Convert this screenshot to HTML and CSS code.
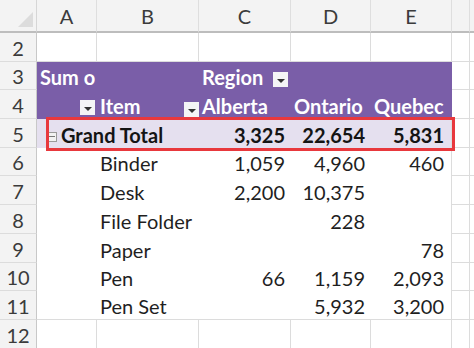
FILE: index.html
```html
<!DOCTYPE html>
<html lang="en">
<head>
  <meta charset="UTF-8" />
  <title>Pivot Table</title>
  <link rel="stylesheet" href="styles.css">
</head>
<body>
  <div class="sheet">
    <!-- column headers -->
    <div class="corner"><span class="tri"></span></div>
    <div class="hd">A</div>
    <div class="hd">B</div>
    <div class="hd">C</div>
    <div class="hd">D</div>
    <div class="hd">E</div>
    <div class="hd"></div>
    <div class="hd"></div>

    <!-- row 2 -->
    <div class="rn">2</div>
    <div class="c"></div><div class="c"></div><div class="c"></div><div class="c"></div>
    <div class="c"></div><div class="c"></div><div class="c"></div>

    <!-- row 3 -->
    <div class="rn">3</div>
    <div class="ph clip">Sum o</div>
    <div class="ph"></div>
    <div class="ph">Region <span class="dd dd-region"></span></div>
    <div class="ph"></div>
    <div class="ph"></div>
    <div class="c"></div><div class="c"></div>

    <!-- row 4 -->
    <div class="rn">4</div>
    <div class="ph right"><span class="dd"></span></div>
    <div class="ph split"><span>Item</span><span class="dd"></span></div>
    <div class="ph">Alberta</div>
    <div class="ph">Ontario</div>
    <div class="ph clip">Quebec</div>
    <div class="c"></div><div class="c"></div>

    <!-- row 5 -->
    <div class="rn">5</div>
    <div class="gt wide"><span class="minus"></span>Grand Total</div>
    <div class="gt num">3,325</div>
    <div class="gt num">22,654</div>
    <div class="gt num edge">5,831</div>
    <div class="c"></div><div class="c"></div>

    <!-- rows 6-11 -->
    <div class="rn">6</div>
    <div class="pv"></div><div class="pv">Binder</div>
    <div class="pv num">1,059</div><div class="pv num">4,960</div><div class="pv num edge">460</div>
    <div class="c"></div><div class="c"></div>

    <div class="rn">7</div>
    <div class="pv"></div><div class="pv">Desk</div>
    <div class="pv num">2,200</div><div class="pv num">10,375</div><div class="pv num edge"></div>
    <div class="c"></div><div class="c"></div>

    <div class="rn">8</div>
    <div class="pv"></div><div class="pv">File Folder</div>
    <div class="pv num"></div><div class="pv num">228</div><div class="pv num edge"></div>
    <div class="c"></div><div class="c"></div>

    <div class="rn">9</div>
    <div class="pv"></div><div class="pv">Paper</div>
    <div class="pv num"></div><div class="pv num"></div><div class="pv num edge">78</div>
    <div class="c"></div><div class="c"></div>

    <div class="rn">10</div>
    <div class="pv"></div><div class="pv">Pen</div>
    <div class="pv num">66</div><div class="pv num">1,159</div><div class="pv num edge">2,093</div>
    <div class="c"></div><div class="c"></div>

    <div class="rn">11</div>
    <div class="pv last"></div><div class="pv last">Pen Set</div>
    <div class="pv num last"></div><div class="pv num last">5,932</div><div class="pv num edge last">3,200</div>
    <div class="c"></div><div class="c"></div>

    <!-- row 12 -->
    <div class="rn">12</div>
    <div class="c"></div><div class="c"></div><div class="c"></div><div class="c"></div>
    <div class="c"></div><div class="c"></div><div class="c"></div>

    <div class="highlight"></div>
  </div>
</body>
</html>
```

FILE: styles.css
```css
* {
  box-sizing: border-box;
}
body {
  margin: 0;
  background: #ffffff;
  font-family: Lato, "Open Sans", sans-serif;
  color: #1f1f1f;
  overflow: hidden;
}

.sheet {
  position: relative;
  display: grid;
  grid-template-columns: 37px 60px 102px 92px 80px 81px 18px 1fr;
  grid-template-rows: 33px repeat(11, 28.7px);
  font-size: 20px;
}
.sheet > div {
  display: flex;
  align-items: flex-end;
  padding: 0 3px 1px;
  white-space: nowrap;
  line-height: 24px;
}

.corner {
  background: #f3f3f3;
  border-right: 1px solid #d6d6d6;
  border-bottom: 2px solid #bdbdbd;
  position: relative;
}
.tri {
  position: absolute;
  right: 3px;
  bottom: 4px;
  width: 0;
  height: 0;
  border-left: 15px solid transparent;
  border-bottom: 15px solid #dcdcdc;
}
.sheet > .hd {
  background: #f3f3f3;
  color: #3b3b3b;
  justify-content: center;
  border-right: 1px solid #dedede;
  border-bottom: 2px solid #bdbdbd;
  padding-bottom: 3px;
}
.sheet > .rn {
  background: #f3f3f3;
  color: #3b3b3b;
  justify-content: center;
  border-right: 1px solid #c8c8c8;
  border-bottom: 1px solid #dcdcdc;
  padding: 0 0 1px;
}
.c {
  border-right: 1px solid #dcdcdc;
  border-bottom: 1px solid #dcdcdc;
}

.ph {
  background: #7a5ea8;
  color: #ffffff;
  font-weight: 700;
}
.clip {
  overflow: hidden;
}
.sheet > .right {
  justify-content: flex-end;
  padding-right: 2px;
  padding-bottom: 2px;
}
.sheet > .split {
  justify-content: space-between;
  padding-right: 0;
  padding-bottom: 1px;
}
.split .dd {
  margin-bottom: 1px;
}
.dd {
  display: inline-flex;
  align-items: center;
  justify-content: center;
  width: 15px;
  height: 15px;
  background: #f4f4f6;
  margin-bottom: 2px;
}
.dd::after {
  content: "";
  margin-top: 3px;
  border-left: 4px solid transparent;
  border-right: 4px solid transparent;
  border-top: 4px solid #333333;
}
.dd-region {
  margin-left: 10px;
}

.gt {
  background: #e5e0ef;
  font-weight: 700;
  color: #141414;
}
.wide {
  grid-column: span 2;
}
.sheet > .wide {
  padding-left: 10px;
}
.minus {
  width: 10px;
  height: 10px;
  border: 1px solid #9a9a9a;
  background: #f2f2f2;
  margin: 0 4px 5px 0;
  position: relative;
}
.minus::after {
  content: "";
  position: absolute;
  left: 1px;
  right: 1px;
  top: 3px;
  height: 1px;
  background: #777777;
}

.pv {
  background: #ffffff;
}
.sheet > .num {
  justify-content: flex-end;
  padding-right: 6px;
}
.sheet > .edge {
  border-right: 1px solid #dcdcdc;
  padding-right: 7px;
}
.last {
  border-bottom: 1px solid #dcdcdc;
}

.highlight {
  position: absolute;
  left: 46px;
  top: 117px;
  width: 409px;
  height: 34px;
  border: 3px solid #e8383d;
  pointer-events: none;
}
```
